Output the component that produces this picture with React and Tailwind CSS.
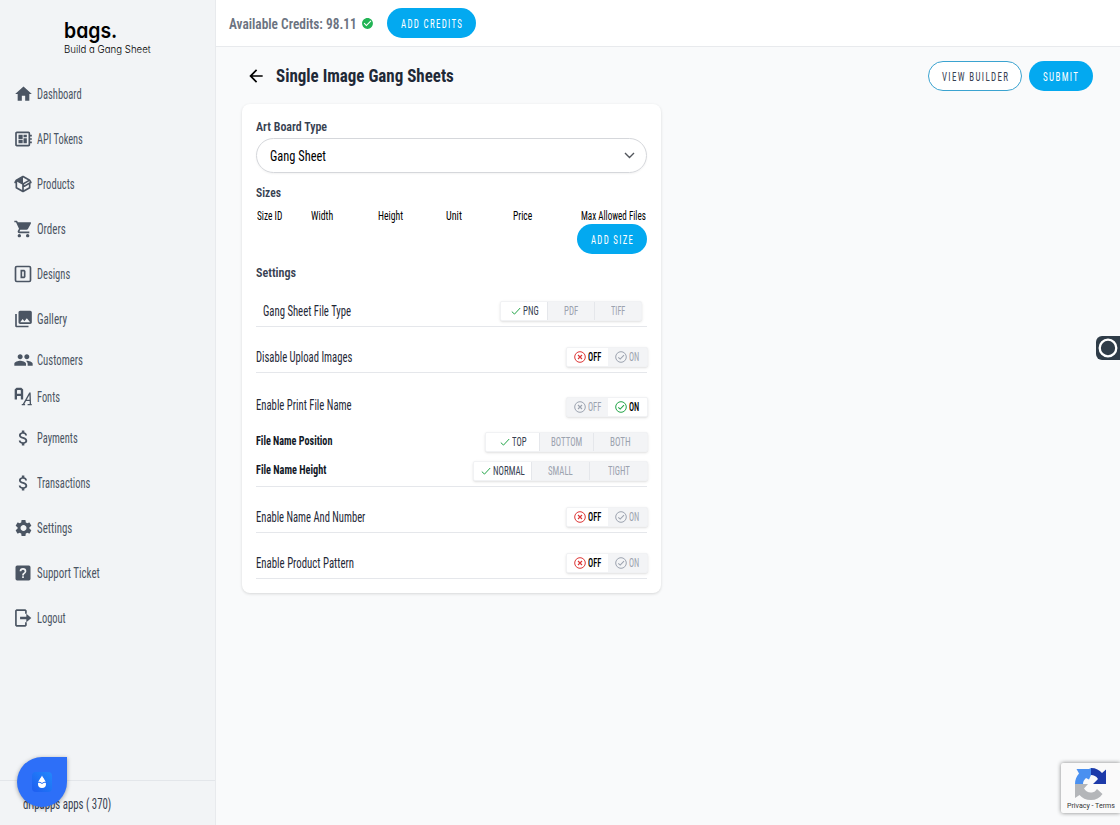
import { useLayoutEffect, useRef, useState } from 'react'
import {
  MdArrowBack,
  MdAttachMoney,
  MdCheckCircle,
  MdDeveloperBoard,
  MdHome,
  MdPeople,
  MdPhotoLibrary,
  MdSettings,
  MdShoppingCart,
} from 'react-icons/md'

// Condensed text: squeezes a line of text so that it fills exactly w pixels
function Fit({ w, className = '', children }) {
  const ref = useRef(null)
  const [scale, setScale] = useState(1)

  useLayoutEffect(() => {
    setScale(w / ref.current.offsetWidth)
  }, [w])

  return (
    <span className="inline-flex shrink-0" style={{ width: w }}>
      <span
        ref={ref}
        className={`inline-block shrink-0 origin-left whitespace-nowrap ${className}`}
        style={{ transform: `scaleX(${scale})` }}
      >
        {children}
      </span>
    </span>
  )
}

function PackageIcon({ size }) {
  return (
    <svg width={size} height={size} viewBox="0 0 24 24" fill="currentColor">
      <path d="M2,10.96C1.5,10.68 1.35,10.07 1.63,9.59L3.13,7C3.24,6.8 3.41,6.66 3.6,6.58L11.43,2.18C11.59,2.06 11.79,2 12,2C12.21,2 12.41,2.06 12.57,2.18L20.47,6.62C20.66,6.72 20.82,6.88 20.91,7.08L22.36,9.6C22.64,10.08 22.47,10.69 22,10.96L21,11.54V16.5C21,16.88 20.79,17.21 20.47,17.38L12.57,21.82C12.41,21.94 12.21,22 12,22C11.79,22 11.59,21.94 11.43,21.82L3.53,17.38C3.21,17.21 3,16.88 3,16.5V10.96C2.7,11.13 2.32,11.14 2,10.96M12,4.15V4.15L12,10.85V10.85L17.96,7.5L12,4.15M5,15.91L11,19.29V12.58L5,9.21V15.91M19,15.91V12.69L14,15.59C13.67,15.77 13.3,15.76 13,15.6V19.29L19,15.91M13.85,13.36L20.13,9.73L19.55,8.72L13.27,12.35L13.85,13.36Z" />
    </svg>
  )
}

function DesignIcon({ size }) {
  return (
    <svg width={size} height={size} viewBox="0 0 24 24" fill="none" stroke="currentColor" strokeWidth="2">
      <rect x="3" y="3" width="18" height="18" rx="1.5" />
      <path d="M10 8h3.2l.8.8v6.4l-.8.8H10z" />
    </svg>
  )
}

function FontsIcon({ size }) {
  return (
    <svg width={size} height={size} viewBox="0 0 24 24" fill="none" stroke="currentColor">
      <path strokeWidth="2.8" d="M3.400 15V3.600l1.400-1.400h4.600l1.400 1.400V15M3.400 9.500h7.400" />
      <path strokeWidth="1.600" d="M10.500 21.200h4M17.500 21.200h5M12.300 21.200L20 7.500h.4l.5 13.700M15 16h5.600" />
    </svg>
  )
}

function HelpIcon({ size }) {
  return (
    <svg width={size} height={size} viewBox="0 0 24 24" fill="currentColor">
      <path d="M11,18H13V16H11V18M12,6A4,4 0 0,0 8,10H10A2,2 0 0,1 12,8A2,2 0 0,1 14,10C14,12 11,11.75 11,15H13C13,12.75 16,12.5 16,10A4,4 0 0,0 12,6M5,3H19A2,2 0 0,1 21,5V19A2,2 0 0,1 19,21H5A2,2 0 0,1 3,19V5A2,2 0 0,1 5,3Z" fillRule="evenodd" />
    </svg>
  )
}

function LogoutIcon({ size }) {
  return (
    <svg width={size} height={size} viewBox="0 0 24 24" fill="none" stroke="currentColor" strokeWidth="2">
      <path d="M15.500 7V3.500L14.500 2.500H4.500l-1 1v17l1 1h10l1-1V17" />
      <path strokeWidth="3" d="M8.500 12h9" />
      <path d="M16 7L22 12l-6 5z" fill="currentColor" stroke="none" />
    </svg>
  )
}

const menu = [
  { label: 'Dashboard', w: 45, Icon: MdHome },
  { label: 'API Tokens', w: 46, Icon: MdDeveloperBoard },
  { label: 'Products', w: 38, Icon: PackageIcon },
  { label: 'Orders', w: 29, Icon: MdShoppingCart },
  { label: 'Designs', w: 33, Icon: DesignIcon },
  { label: 'Gallery', w: 30, Icon: MdPhotoLibrary },
  { label: 'Customers', w: 46, Icon: MdPeople, tight: true },
  { label: 'Fonts', w: 23, Icon: FontsIcon, tight: true },
  { label: 'Payments', w: 41, Icon: MdAttachMoney },
  { label: 'Transactions', w: 53, Icon: MdAttachMoney },
  { label: 'Settings', w: 35, Icon: MdSettings },
  { label: 'Support Ticket', w: 62.500, Icon: HelpIcon },
  { label: 'Logout', w: 29, Icon: LogoutIcon },
]

function Sidebar() {
  return (
    <aside className="flex w-[216px] shrink-0 flex-col border-r border-[#e8eaed] bg-[#f2f4f6]">
      <div className="flex h-[71px] flex-col pl-16 pt-[18px] text-black [font-family:Inter,sans-serif] [font-feature-settings:'cv11'] [font-stretch:100%]">
        <Fit w={53} className="text-[22px] font-semibold leading-[25px]">bags.</Fit>
        <Fit w={86.500} className="text-[10.500px] font-light leading-[13px]">Build a Gang Sheet</Fit>
      </div>
      <nav className="text-[#4b5563]">
        {menu.map(({ label, w, Icon, tight }) => (
          <a key={label} className={`flex items-center gap-[3px] pl-[13px] ${tight ? 'h-[37px]' : 'h-[45px]'}`}>
            <Icon size={20} className="translate-x-[0.500px]" />
            <Fit w={w} className="translate-x-px translate-y-px text-[14px] font-[450]">{label}</Fit>
          </a>
        ))}
      </nav>
      <div className="mt-auto flex h-[45px] items-center border-t border-[#e3e6ea] pl-[23px] text-[#374151]">
        <Fit w={88} className="translate-y-px text-[14px]">dripapps apps ( 370)</Fit>
      </div>
    </aside>
  )
}

function Check({ className = '' }) {
  return (
    <svg width="10" height="10" viewBox="0 0 10 10" fill="none" stroke="currentColor" className={className}>
      <path d="M.8 5.600l2.700 2.500L9.200 2" strokeWidth="1" />
    </svg>
  )
}

function Segments({ items, width }) {
  return (
    <div className={`flex h-5 divide-x divide-[#e5e7eb] overflow-hidden rounded-[2px] border border-[#f1f2f4] bg-[#f3f4f6] leading-none shadow-sm ${width}`}>
      {items.map(([label, w], i) => (
        <div
          key={label}
          className={`flex flex-1 items-center justify-center gap-[2px] text-[12px] ${i === 0 ? 'bg-white text-[#374151]' : 'text-[#9ca3af]'}`}
        >
          {i === 0 && <Check className="ml-px text-[#22a447]" />}
          <Fit w={w} className="font-[450]">{label}</Fit>
        </div>
      ))}
    </div>
  )
}

function Toggle({ on = false }) {
  return (
    <div className="-mr-px flex h-5 w-[82px] overflow-hidden rounded-[2px] border border-[#f1f2f4] bg-[#f3f4f6] text-[12px] leading-none shadow-sm">
      <div className={`flex flex-1 items-center justify-center gap-[2px] pl-px ${on ? 'text-[#9ca3af]' : 'bg-white text-black'}`}>
        <svg width="12" height="12" viewBox="0 0 12 12" fill="none" stroke="currentColor" className={on ? '' : 'text-[#dc3535]'}>
          <circle cx="6" cy="6" r="5.300" />
          <path d="M4 4l4 4M8 4l-4 4" strokeWidth="1.100" />
        </svg>
        <Fit w={13.500} className={on ? '' : 'font-medium'}>OFF</Fit>
      </div>
      <div className={`flex flex-1 items-center justify-center gap-[2px] ${on ? 'bg-white text-black' : 'text-[#9ca3af]'}`}>
        <svg width="12" height="12" viewBox="0 0 12 12" fill="none" stroke="currentColor" className={on ? 'text-[#22a447]' : ''}>
          <circle cx="6" cy="6" r="5.300" />
          <path d="M3.300 6.300l1.900 1.800L9 4.200" strokeWidth="1.100" />
        </svg>
        <Fit w={10.500} className={on ? 'font-medium' : ''}>ON</Fit>
      </div>
    </div>
  )
}

function ToggleRow({ label, w }) {
  return (
    <div className="flex items-center justify-between border-b border-[#e5e7eb] pb-[5px] pt-5 text-[14px] leading-[18px]">
      <Fit w={w}>{label}</Fit>
      <Toggle />
    </div>
  )
}

function Button({ w, className, outline, children }) {
  return (
    <button
      className={`flex h-[30px] items-center justify-center rounded-full text-[12px] tracking-[1.8px] ${
        outline ? 'border border-[#3ba3d0] bg-white text-[#374151]' : 'bg-[#03a9f0] text-white'
      } ${className}`}
    >
      <Fit w={w} className="translate-y-px font-[450]">{children}</Fit>
    </button>
  )
}

function Card() {
  return (
    <section className="ml-[26px] mt-[13px] w-[419px] rounded-lg bg-white px-[14px] pb-[14px] pt-3 text-[#1f2937] shadow-[0_1px_3px_rgba(0,0,0,0.14)]">
      <div className="flex h-[22px] items-center pb-px text-[13px] font-semibold text-[#374151]">
        <Fit w={71}>Art Board Type</Fit>
      </div>
      <div className="flex h-[35px] items-center justify-between rounded-full border border-[#d5d7db] pl-[13px] pr-[11px] text-[15.500px] text-black shadow-xs">
        <Fit w={56} className="translate-y-px">Gang Sheet</Fit>
        <svg width="11" height="7" viewBox="0 0 11 7" fill="none" stroke="#52565c" strokeWidth="1.400">
          <path d="M1 1l4.500 4.500L10 1" />
        </svg>
      </div>
      <div className="flex h-[38px] items-center text-[13px] font-semibold text-[#374151]">
        <Fit w={25} className="translate-y-px">Sizes</Fit>
      </div>
      <div className="grid h-[10px] grid-cols-[54px_67.500px_67.500px_67.500px_67.500px_1fr] items-center pl-[0.500px] text-[12px] leading-[10px] text-black">
        <Fit w={25}>Size ID</Fit>
        <Fit w={22}>Width</Fit>
        <Fit w={25}>Height</Fit>
        <Fit w={16}>Unit</Fit>
        <Fit w={19}>Price</Fit>
        <Fit w={65}>Max Allowed Files</Fit>
      </div>
      <div className="mt-[3px] flex justify-end">
        <Button w={43} className="w-[70px]">ADD SIZE</Button>
      </div>
      <div className="flex h-[38px] items-center text-[13px] font-semibold text-[#374151]">
        <Fit w={40}>Settings</Fit>
      </div>

      <div className="flex items-center justify-between border-b border-[#e5e7eb] pb-[5px] pl-[7px] pr-[5px] pt-[9px] text-[14px] leading-[18px]">
        <Fit w={88}>Gang Sheet File Type</Fit>
        <Segments width="w-[142px]" items={[['PNG', 15.500], ['PDF', 14], ['TIFF', 14.500]]} />
      </div>
      <ToggleRow label="Disable Upload Images" w={96.500} />
      <div className="border-b border-[#e5e7eb] pb-[5px] pt-6">
        <div className="flex h-5 items-center justify-between text-[14px] leading-[18px]">
          <Fit w={95.500} className="-translate-y-px pb-[3px]">Enable Print File Name</Fit>
          <Toggle on />
        </div>
        <div className="mt-[15px] flex h-5 items-center justify-between text-[12px]">
          <Fit w={76} className="pb-[3px] font-bold text-[#111827]">File Name Position</Fit>
          <Segments width="-mr-px w-[163px]" items={[['TOP', 14.500], ['BOTTOM', 31], ['BOTH', 20.500]]} />
        </div>
        <div className="mt-[9px] flex h-5 items-center justify-between text-[12px]">
          <Fit w={70} className="pb-[3px] font-bold text-[#111827]">File Name Height</Fit>
          <Segments width="-mr-px w-[175px]" items={[['NORMAL', 32], ['SMALL', 25], ['TIGHT', 22]]} />
        </div>
      </div>
      <ToggleRow label="Enable Name And Number" w={109.500} />
      <ToggleRow label="Enable Product Pattern" w={98} />
    </section>
  )
}

function Captcha() {
  return (
    <div className="absolute bottom-3 right-0 flex h-[50px] w-[59px] flex-col items-center rounded-l-[2px] bg-[#fafafa] pt-1 shadow-[0_0_4px_#808080]">
      <svg width="33" height="34" viewBox="0 0 33 34">
        <path fill="#1c3aa9" d="M17 1c5 0 8.500 2 11 5l4-3.500v14.500H19l5-5c-2-3-4-4-7-4z" />
        <path fill="#4a90f0" d="M17 1v7l-2 4.500-3-1.500c-2 2-3 3.500-3 6H1c0-4 1.500-8 4-10.500L2.500 2H15z" />
        <path fill="#b4b6b9" d="M1 17h13l-4 4.500c2 3 4.500 4.500 8 4 2.500-.3 3.500-1.500 5-3.500l5.500 5C25.500 31 22 33 17 33c-5 0-9-2-11.500-5L1 31z" />
      </svg>
      <span className="flex text-[7.500px] leading-[10px] text-[#333] [font-stretch:100%]">
        <Fit w={48}>Privacy - Terms</Fit>
      </span>
    </div>
  )
}

function App() {
  return (
    <div className="relative flex h-[825px] overflow-hidden bg-[#f9fafb] [font-family:Roboto,sans-serif] [font-stretch:75%]">
      <Sidebar />
      <main className="flex-1">
        <header className="flex h-[47px] items-center border-b border-[#e8eaed] bg-white pl-[13px]">
          <Fit w={127.500} className="translate-y-px text-[15px] font-semibold text-[#6b7280]">Available Credits: 98.11</Fit>
          <MdCheckCircle size={13} className="ml-1 text-[#22b455]" />
          <Button w={62} className="ml-[13.500px] w-[89px]">ADD CREDITS</Button>
        </header>
        <div className="flex items-center pl-[30px] pr-[27px] pt-[14px]">
          <MdArrowBack size={20} className="text-black" />
          <h1 className="ml-[10px] flex text-[18.500px] font-bold text-[#1f2937]">
            <Fit w={178} className="translate-y-px">Single Image Gang Sheets</Fit>
          </h1>
          <Button w={67} outline className="ml-auto w-[94px]">VIEW BUILDER</Button>
          <Button w={36} className="ml-[7px] w-[64px]">SUBMIT</Button>
        </div>
        <Card />
      </main>

      {/* floating widgets */}
      <div className="absolute bottom-[18px] left-[17px] flex size-[50px] items-center justify-center rounded-full rounded-tr-[6px] bg-[#2d6ff8] shadow-[0_1px_4px_rgba(0,0,0,0.35)]">
        <div className="flex size-5 items-center justify-center rounded-[4px] bg-linear-to-tr from-[#1f5cf0] to-[#2388fb]">
          <svg width="10" height="14" viewBox="0 0 10 14">
            <path fill="#fff" d="M5 .500C6 3 9 5.500 9 9a4 4 0 0 1-8 0C1 5.500 4 3 5 .500z" />
            <path d="M0 7.300h3l2 1.200 2-1.200h3" fill="none" stroke="#2370f6" strokeWidth="1" />
          </svg>
        </div>
      </div>
      <div className="absolute right-0 top-[336px] flex h-6 w-6 items-center justify-center rounded-l-[6px] bg-[#2f3c48]">
        <svg width="20" height="20" viewBox="0 0 20 20" fill="none" stroke="#fff" strokeWidth="2.300">
          <circle cx="10" cy="10" r="8.300" />
        </svg>
      </div>
      <Captcha />
    </div>
  )
}

export default App
